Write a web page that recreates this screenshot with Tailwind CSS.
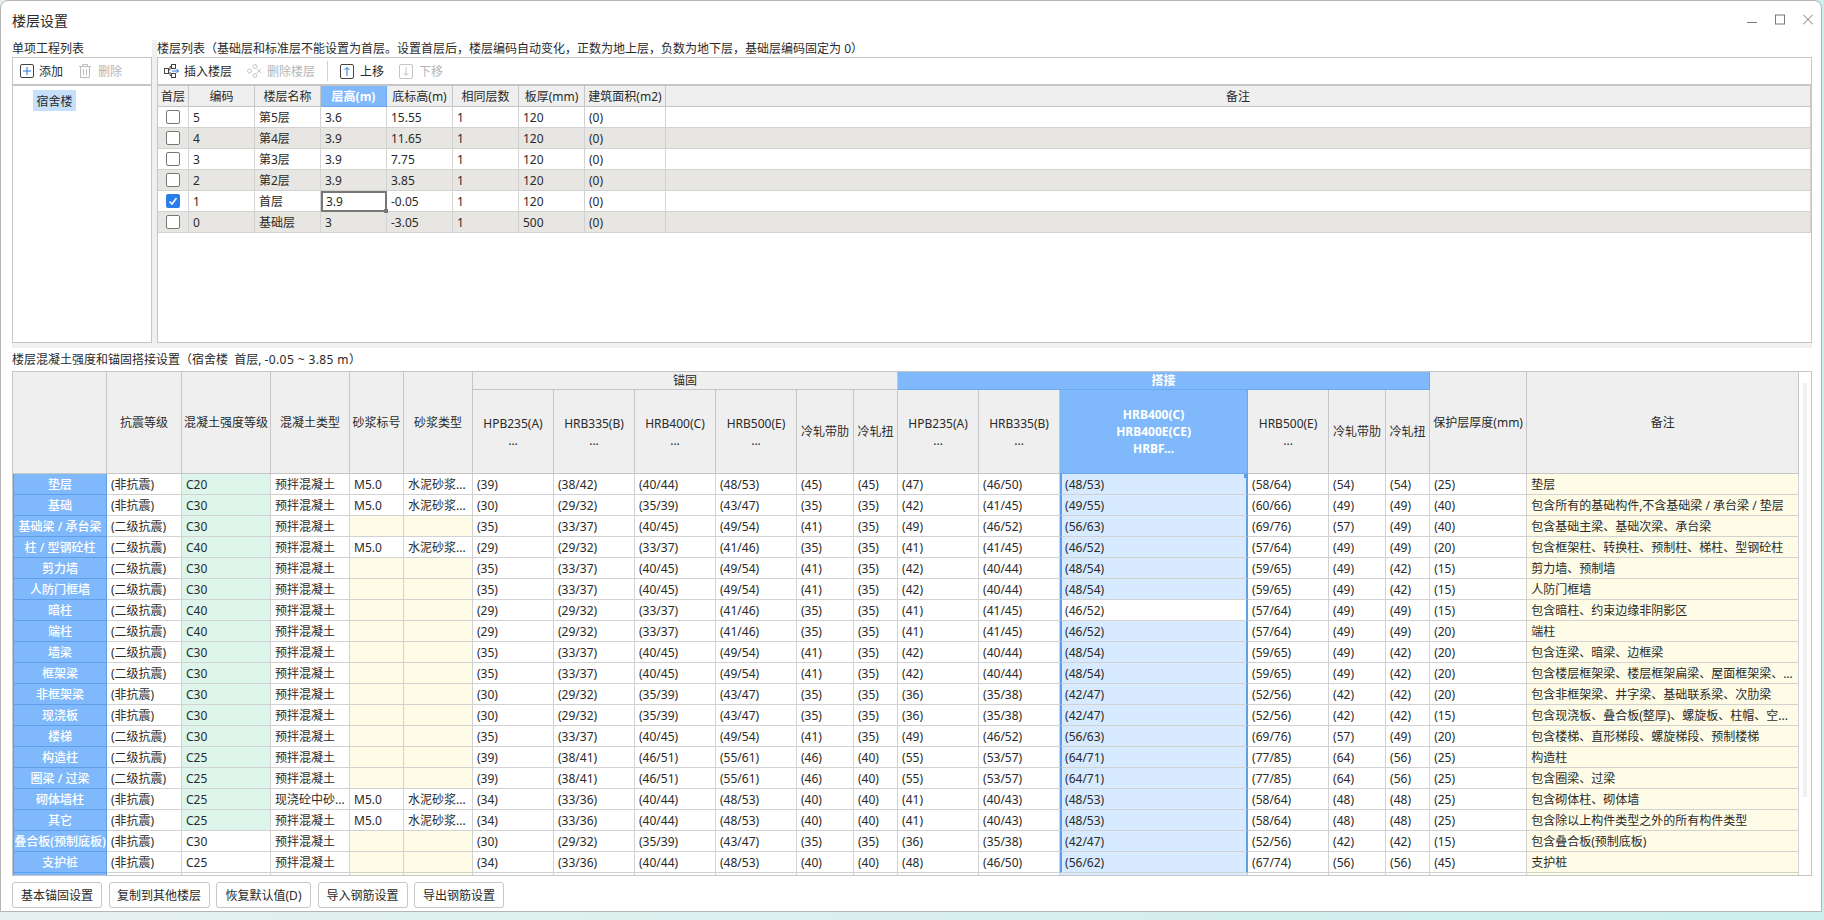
<!DOCTYPE html>
<html lang="zh-CN">
<head>
    <meta charset="UTF-8">
    <title>楼层设置</title>
    <script src="https://cdn.jsdelivr.net/npm/@tailwindcss/browser@4"></script>
</head>
<body class="w-[1824px] h-[920px] overflow-hidden bg-linear-to-r from-[#e6f1ef] to-[#cbeeee] font-['Noto_Sans','Noto_Sans_CJK_SC',sans-serif] text-[12px] leading-[17px] text-[#2a2a2a]">
<div class="w-[1822px] h-[912px] bg-white border border-[#b5b5b5] rounded-t-lg pl-[11px] pr-[9px]">
    <!-- title bar -->
    <div class="h-[39px] flex items-center justify-between">
        <span class="text-[14px]">楼层设置</span>
        <div class="flex items-center gap-[18px] -mt-[1px] -mr-[1px]">
            <svg width="10" height="12" viewBox="0 0 10 12"><path d="M0 8.500h10" stroke="#777" fill="none"/></svg>
            <svg width="10" height="12" viewBox="0 0 10 12"><rect x=".5" y="1" width="9" height="9" stroke="#777" fill="none"/></svg>
            <svg width="10" height="12" viewBox="0 0 10 12"><path d="M0 .5l10 10M10 .5L0 10.500" stroke="#777" fill="none"/></svg>
        </div>
    </div>

    <!-- upper part -->
    <div class="flex h-[303px]">
        <div class="w-[140px] flex flex-col">
            <div class="h-[17px]">单项工程列表</div>
            <div class="flex-1 border border-[#c6c6c6] flex flex-col">
                <div class="h-[26px] flex items-center border-b-2 border-[#c6c6c6] box-content">
                    <svg class="ml-[7px]" width="14" height="14" viewBox="0 0 14 14"><rect x=".5" y=".5" width="13" height="13" rx="1.500" stroke="#444" fill="none"/><path d="M7 3v8M3 7h8" stroke="#2277dd" fill="none"/></svg>
                    <span class="ml-[5px]">添加</span>
                    <svg class="ml-[15px]" width="14" height="14" viewBox="0 0 14 14" fill="none" stroke="#bdbdbd"><path d="M1 2.500h12M4.500 2.500v-2h5v2M2.500 2.500v11h9v-11M5.500 5v6M8.500 5v6"/></svg>
                    <span class="ml-[6px] text-[#b5b5b5]">删除</span>
                </div>
                <div class="pt-[4px] pl-[20px]">
                    <div class="w-[43px] h-[21px] pt-[1px] bg-[#c6e0fb] flex items-center justify-center">宿舍楼</div>
                </div>
            </div>
        </div>
        <div class="w-[5px] bg-[#f0f0f0]"></div>
        <div class="flex-1 flex flex-col min-w-0">
            <div class="h-[17px] whitespace-nowrap">楼层列表（基础层和标准层不能设置为首层。设置首层后，楼层编码自动变化，正数为地上层，负数为地下层，基础层编码固定为 0）</div>
            <div class="flex-1 border border-[#c6c6c6] flex flex-col">
                <div class="h-[26px] flex items-center border-b-2 border-[#c6c6c6] box-content">
                    <svg class="ml-[6px]" width="15" height="14" viewBox="0 0 15 14" fill="none" stroke="#444"><rect x=".5" y="4.500" width="4" height="5"/><path d="M4.500 6H6V2.500h1.500M6 8v3.500h1.500"/><rect x="7.500" y=".5" width="4" height="4"/><rect x="7.500" y="9.500" width="4" height="4"/><path d="M8 7h6.500M12.500 5l2 2-2 2" stroke="#2277dd"/></svg>
                    <span class="ml-[5px]">插入楼层</span>
                    <svg class="ml-[15px]" width="15" height="14" viewBox="0 0 15 14" fill="none" stroke="#c4c4c4"><circle cx="2.500" cy="7" r="2"/><circle cx="8" cy="2.500" r="2"/><circle cx="8" cy="11.500" r="2"/><path d="M10 5l4 4M14 5l-4 4"/></svg>
                    <span class="ml-[5px] text-[#b5b5b5]">删除楼层</span>
                    <div class="ml-[12px] w-px h-[20px] bg-[#d0d0d0]"></div>
                    <svg class="ml-[12px]" width="14" height="15" viewBox="0 0 14 15" fill="none"><rect x=".5" y=".5" width="13" height="14" rx="1.500" stroke="#444"/><path d="M7 12V3.500M4.500 6L7 3.500 9.500 6" stroke="#2277dd"/></svg>
                    <span class="ml-[6px]">上移</span>
                    <svg class="ml-[15px]" width="14" height="15" viewBox="0 0 14 15" fill="none" stroke="#c4c4c4"><rect x=".5" y=".5" width="13" height="14" rx="1.500"/><path d="M7 3v8.500M4.500 9L7 11.500 9.500 9"/></svg>
                    <span class="ml-[6px] text-[#b5b5b5]">下移</span>
                </div>
                <table class="table-fixed w-[1653px] border-separate border-spacing-0">
                    <colgroup>
                        <col class="w-[31px]"><col class="w-[66px]"><col class="w-[66px]"><col class="w-[66px]"><col class="w-[66px]"><col class="w-[66px]"><col class="w-[66px]"><col class="w-[81px]"><col>
                    </colgroup>
                    <thead>
                        <tr class="h-[21px] bg-[#efefef] [&_th]:font-normal [&_th]:border-r [&_th]:border-b [&_th]:border-[#c6c6c6] [&_th]:p-0 [&_th]:whitespace-nowrap">
                            <th>首层</th><th>编码</th><th>楼层名称</th><th class="!bg-[#7fb9fb] text-white !font-bold !border-[#6aa9f2]">层高(m)</th><th>底标高(m)</th><th>相同层数</th><th>板厚(mm)</th><th>建筑面积(m2)</th><th>备注</th>
                        </tr>
                    </thead>
                    <tbody id="floors"></tbody>
                </table>
            </div>
        </div>
    </div>
    <div class="h-[5px] bg-[#f0f0f0]"></div>

    <!-- lower part -->
    <div class="h-[23px] flex items-center">楼层混凝土强度和锚固搭接设置（宿舍楼&nbsp;&nbsp;首层, <span class="ml-[3px] tracking-[0.4px]">-0.05 ~ 3.85 m</span>）</div>
    <div class="w-[1800px] h-[505px] border border-[#c6c6c6] flex overflow-hidden">
        <table class="table-fixed w-[1786px] h-fit shrink-0 border-separate border-spacing-0">
            <colgroup>
                <col class="w-[94px]"><col class="w-[75px]"><col class="w-[89px]"><col class="w-[79px]"><col class="w-[54px]"><col class="w-[69px]">
                <col class="w-[81px]"><col class="w-[81px]"><col class="w-[81px]"><col class="w-[81px]"><col class="w-[57px]"><col class="w-[44px]">
                <col class="w-[81px]"><col class="w-[81px]"><col class="w-[188px]"><col class="w-[81px]"><col class="w-[57px]"><col class="w-[44px]">
                <col class="w-[97px]"><col class="w-[272px]">
            </colgroup>
            <thead class="bg-[#efefef] [&_th]:font-normal [&_th]:p-0 [&_th]:border-r [&_th]:border-b [&_th]:border-[#c6c6c6] [&_th]:whitespace-nowrap [&_th]:overflow-hidden">
                <tr class="h-[17px]">
                    <th rowspan="2"></th><th rowspan="2">抗震等级</th><th rowspan="2">混凝土强度等级</th><th rowspan="2">混凝土类型</th><th rowspan="2">砂浆标号</th><th rowspan="2">砂浆类型</th>
                    <th colspan="6">锚固</th>
                    <th colspan="6" class="!bg-[#7fb9fb] text-white !font-bold !border-[#6aa9f2]">搭接</th>
                    <th rowspan="2">保护层厚度(mm)</th><th rowspan="2">备注</th>
                </tr>
                <tr class="h-[84px]">
                    <th>HPB235(A)<br>...</th><th>HRB335(B)<br>...</th><th>HRB400(C)<br>...</th><th>HRB500(E)<br>...</th><th>冷轧带肋</th><th>冷轧扭</th>
                    <th>HPB235(A)<br>...</th><th>HRB335(B)<br>...</th>
                    <th class="!bg-[#7fb9fb] text-white !font-bold !border-[#6aa9f2]">HRB400(C)<br>HRB400E(CE)<br>HRBF...</th>
                    <th>HRB500(E)<br>...</th><th>冷轧带肋</th><th>冷轧扭</th>
                </tr>
            </thead>
            <tbody id="rows"></tbody>
        </table>
        <div class="flex-1 pt-[11px] pl-[4px]">
            <div class="w-[4px] h-[414px] bg-[#f0f0f0]"></div>
        </div>
    </div>

    <!-- buttons -->
    <div class="mt-[6px] flex gap-[6.5px]">
        <button class="w-[90px] h-[26px] border border-[#c6c6c6] rounded-[3px]">基本锚固设置</button>
        <button class="w-[101px] h-[26px] border border-[#c6c6c6] rounded-[3px]">复制到其他楼层</button>
        <button class="w-[95px] h-[26px] border border-[#c6c6c6] rounded-[3px]">恢复默认值(D)</button>
        <button class="w-[90px] h-[26px] border border-[#c6c6c6] rounded-[3px]">导入钢筋设置</button>
        <button class="w-[90px] h-[26px] border border-[#c6c6c6] rounded-[3px]">导出钢筋设置</button>
    </div>
</div>

<script>
    const floors = [
        ['5', '第5层', '3.6', '15.55', '120'],
        ['4', '第4层', '3.9', '11.65', '120'],
        ['3', '第3层', '3.9', '7.75', '120'],
        ['2', '第2层', '3.9', '3.85', '120'],
        ['1', '首层', '3.9', '-0.05', '120'],
        ['0', '基础层', '3', '-3.05', '500']
    ];
    const floorCell = 'border-r border-b border-[#d2d2d2] pl-1 p-0 whitespace-nowrap';
    document.getElementById('floors').innerHTML = floors.map((f, i) => {
        const box = f[0] === '1'
            ? '<div class="w-[14px] h-[14px] mx-auto rounded-[2px] bg-[#2b7de9] flex items-center justify-center"><svg width="10" height="10" viewBox="0 0 10 10"><path d="M1.500 5.500l2.500 2.500 4.500-6" stroke="#fff" stroke-width="1.500" fill="none"/></svg></div>'
            : '<div class="w-[14px] h-[14px] mx-auto rounded-[2px] border border-[#777] bg-white"></div>';
        const height = f[0] === '1'
            ? '<td class="border-2 border-[#777] pl-[3px] relative">' + f[2] + '<i class="absolute -right-[3px] -bottom-[3px] w-[4px] h-[4px] bg-[#777]"></i></td>'
            : '<td class="' + floorCell + '">' + f[2] + '</td>';
        return '<tr class="h-[21px] ' + (i % 2 ? 'bg-[#e7e6e2]' : 'bg-white') + '">'
            + '<td class="border-r border-b border-[#d2d2d2] p-0">' + box + '</td>'
            + '<td class="' + floorCell + '">' + f[0] + '</td>'
            + '<td class="' + floorCell + '">' + f[1] + '</td>'
            + height
            + '<td class="' + floorCell + '">' + f[3] + '</td>'
            + '<td class="' + floorCell + '">1</td>'
            + '<td class="' + floorCell + '">' + f[4] + '</td>'
            + '<td class="' + floorCell + '">(0)</td>'
            + '<td class="' + floorCell + '"></td></tr>';
    }).join('');

    const NA = '(非抗震)', L2 = '(二级抗震)', MIX = '预拌混凝土', SAND = '水泥砂浆...';
    const anchors = {
        a: ['(39)', '(38/42)', '(40/44)', '(48/53)', '(45)', '(45)'],
        b: ['(30)', '(29/32)', '(35/39)', '(43/47)', '(35)', '(35)'],
        c: ['(35)', '(33/37)', '(40/45)', '(49/54)', '(41)', '(35)'],
        d: ['(29)', '(29/32)', '(33/37)', '(41/46)', '(35)', '(35)'],
        e: ['(39)', '(38/41)', '(46/51)', '(55/61)', '(46)', '(40)'],
        f: ['(34)', '(33/36)', '(40/44)', '(48/53)', '(40)', '(40)']
    };
    const laps = {
        a: ['(47)', '(46/50)', '(48/53)', '(58/64)', '(54)', '(54)'],
        b: ['(42)', '(41/45)', '(49/55)', '(60/66)', '(49)', '(49)'],
        c: ['(49)', '(46/52)', '(56/63)', '(69/76)', '(57)', '(49)'],
        d: ['(41)', '(41/45)', '(46/52)', '(57/64)', '(49)', '(49)'],
        e: ['(42)', '(40/44)', '(48/54)', '(59/65)', '(49)', '(42)'],
        f: ['(36)', '(35/38)', '(42/47)', '(52/56)', '(42)', '(42)'],
        g: ['(55)', '(53/57)', '(64/71)', '(77/85)', '(64)', '(56)'],
        h: ['(41)', '(40/43)', '(48/53)', '(58/64)', '(48)', '(48)'],
        i: ['(48)', '(46/50)', '(56/62)', '(67/74)', '(56)', '(56)']
    };
    const rows = [
        ['垫层', NA, 'C20', MIX, 1, 'a', 'a', '(25)', '垫层'],
        ['基础', NA, 'C30', MIX, 1, 'b', 'b', '(40)', '包含所有的基础构件,不含基础梁 / 承台梁 / 垫层'],
        ['基础梁 / 承台梁', L2, 'C30', MIX, 0, 'c', 'c', '(40)', '包含基础主梁、基础次梁、承台梁'],
        ['柱 / 型钢砼柱', L2, 'C40', MIX, 1, 'd', 'd', '(20)', '包含框架柱、转换柱、预制柱、梯柱、型钢砼柱'],
        ['剪力墙', L2, 'C30', MIX, 0, 'c', 'e', '(15)', '剪力墙、预制墙'],
        ['人防门框墙', L2, 'C30', MIX, 0, 'c', 'e', '(15)', '人防门框墙'],
        ['暗柱', L2, 'C40', MIX, 0, 'd', 'd', '(15)', '包含暗柱、约束边缘非阴影区'],
        ['端柱', L2, 'C40', MIX, 0, 'd', 'd', '(20)', '端柱'],
        ['墙梁', L2, 'C30', MIX, 0, 'c', 'e', '(20)', '包含连梁、暗梁、边框梁'],
        ['框架梁', L2, 'C30', MIX, 0, 'c', 'e', '(20)', '包含楼层框架梁、楼层框架扁梁、屋面框架梁、...'],
        ['非框架梁', NA, 'C30', MIX, 0, 'b', 'f', '(20)', '包含非框架梁、井字梁、基础联系梁、次肋梁'],
        ['现浇板', NA, 'C30', MIX, 0, 'b', 'f', '(15)', '包含现浇板、叠合板(整厚)、螺旋板、柱帽、空...'],
        ['楼梯', L2, 'C30', MIX, 0, 'c', 'c', '(20)', '包含楼梯、直形梯段、螺旋梯段、预制楼梯'],
        ['构造柱', L2, 'C25', MIX, 0, 'e', 'g', '(25)', '构造柱'],
        ['圈梁 / 过梁', L2, 'C25', MIX, 0, 'e', 'g', '(25)', '包含圈梁、过梁'],
        ['砌体墙柱', NA, 'C25', '现浇砼中砂...', 1, 'f', 'h', '(25)', '包含砌体柱、砌体墙'],
        ['其它', NA, 'C25', MIX, 1, 'f', 'h', '(25)', '包含除以上构件类型之外的所有构件类型'],
        ['叠合板(预制底板)', NA, 'C30', MIX, 0, 'b', 'f', '(15)', '包含叠合板(预制底板)'],
        ['支护桩', NA, 'C25', MIX, 0, 'f', 'i', '(45)', '支护桩']
    ];
    const base = 'border-r border-b border-[#d2d2d2] p-0 pl-1 whitespace-nowrap overflow-hidden ';
    const td = (text, extra) => '<td class="' + base + (extra || '') + '">' + text + '</td>';
    document.getElementById('rows').innerHTML = rows.map((r, i) => {
        const white = r[0] === '支护桩' || r[0] === '叠合板(预制底板)';
        const lapBg = r[0] === '暗柱' ? 'bg-white' : 'bg-[#d7eaff]';
        const handle = i === 0 ? '<i class="absolute -right-[2px] top-0 w-[4px] h-[4px] bg-[#5f9fe9]"></i>' : '';
        return '<tr class="h-[21px]">'
            + '<td class="border-r border-b border-l border-[#5f9fe9] bg-[#7fb9fb] text-white font-medium text-center p-0 whitespace-nowrap overflow-hidden">' + r[0] + '</td>'
            + td(r[1])
            + td(r[2], white ? '' : 'bg-[#ddf5ea]')
            + td(r[3])
            + td(r[4] ? 'M5.0' : '', r[4] ? '' : 'bg-[#fefce6]')
            + td(r[4] ? SAND : '', r[4] ? '' : 'bg-[#fefce6]')
            + anchors[r[5]].map(v => td(v)).join('')
            + laps[r[6]].map((v, k) => k === 2
                ? '<td class="relative border-l-2 border-r-2 border-b border-l-[#5f9fe9] border-r-[#5f9fe9] border-b-[#d2d2d2] p-0 pl-[3px] ' + lapBg + '">' + v + handle + '</td>'
                : td(v)).join('')
            + td(r[7])
            + td(r[8], 'bg-[#fefce6]')
            + '</tr>';
    }).join('') + '<tr class="h-[21px]">' + '<td class="border-r border-l border-[#5f9fe9] bg-[#7fb9fb]"></td>'
        + Array.from({ length: 19 }, (_, k) => '<td class="border-r border-[#d2d2d2] ' + (k === 18 || k === 3 || k === 4 ? 'bg-[#fefce6]' : k === 13 ? 'bg-[#d7eaff]' : '') + '"></td>').join('') + '</tr>';
</script>
</body>
</html>
